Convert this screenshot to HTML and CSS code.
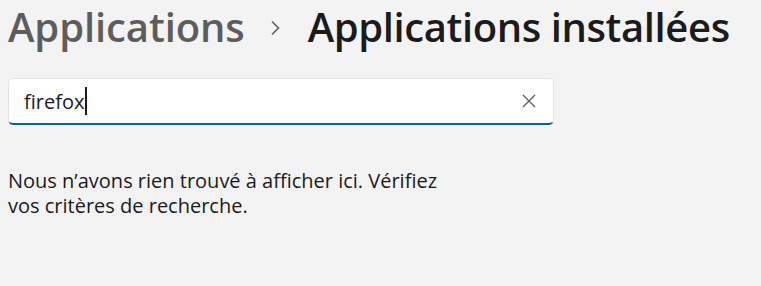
FILE: index.html
```html
<!DOCTYPE html>
<html lang="fr">
<head>
<meta charset="utf-8">
<link rel="stylesheet" href="styles.css">
</head>
<body>
<div class="page">
  <h1 class="crumbs">
    <span class="crumb-parent">Applications</span>
    <svg class="chev" width="12" height="16" viewBox="0 0 12 16"><path d="M3 1.5 L9.5 8 L3 14.5" fill="none" stroke="#5d5d5d" stroke-width="1.6"/></svg>
    <span class="crumb-current">Applications installées</span>
  </h1>
  <div class="search">
    <span class="search-text">firefox<span class="caret"></span></span>
    <svg class="clear" width="14" height="14" viewBox="0 0 14 14"><path d="M1 1 L13 13 M13 1 L1 13" fill="none" stroke="#5f5f5f" stroke-width="1.3"/></svg>
  </div>
  <p class="empty">Nous n’avons rien trouvé à afficher ici. Vérifiez<br>vos critères de recherche.</p>
</div>
</body>
</html>
```
FILE: styles.css
```css
html, body {
  margin: 0;
  padding: 0;
  background: #f3f3f3;
}
body {
  font-family: "Open Sans", "Noto Sans", sans-serif;
  color: #1b1b1b;
}
.page {
  padding: 0 8px;
  display: flex;
  flex-direction: column;
}
.crumbs {
  margin: 0;
  display: flex;
  align-items: center;
  font-size: 40px;
  font-weight: 600;
  line-height: 54px;
  white-space: nowrap;
  letter-spacing: -0.1px;
}
.crumb-parent { color: #5d5d5d; }
.chev { margin: 0 27px 0 24px; position: relative; top: 1px; }
.crumb-current { color: #1b1b1b; letter-spacing: -0.4px; }
.search {
  margin-top: 24px;
  width: 546px;
  height: 47px;
  box-sizing: border-box;
  background: #fff;
  border: 1px solid #e5e5e5;
  border-bottom: 2px solid #005fb8;
  border-radius: 5px;
  display: flex;
  align-items: center;
  padding: 0 17px 0 15px;
}
.search-text {
  flex: 1;
  font-size: 20px;
  color: #1b1b1b;
  display: flex;
  align-items: center;
}
.caret {
  display: inline-block;
  width: 2px;
  height: 28px;
  background: #1b1b1b;
  margin-left: 1px;
}
.empty {
  margin: 43px 0 0;
  font-size: 20px;
  line-height: 25px;
  color: #1b1b1b;
}
```
